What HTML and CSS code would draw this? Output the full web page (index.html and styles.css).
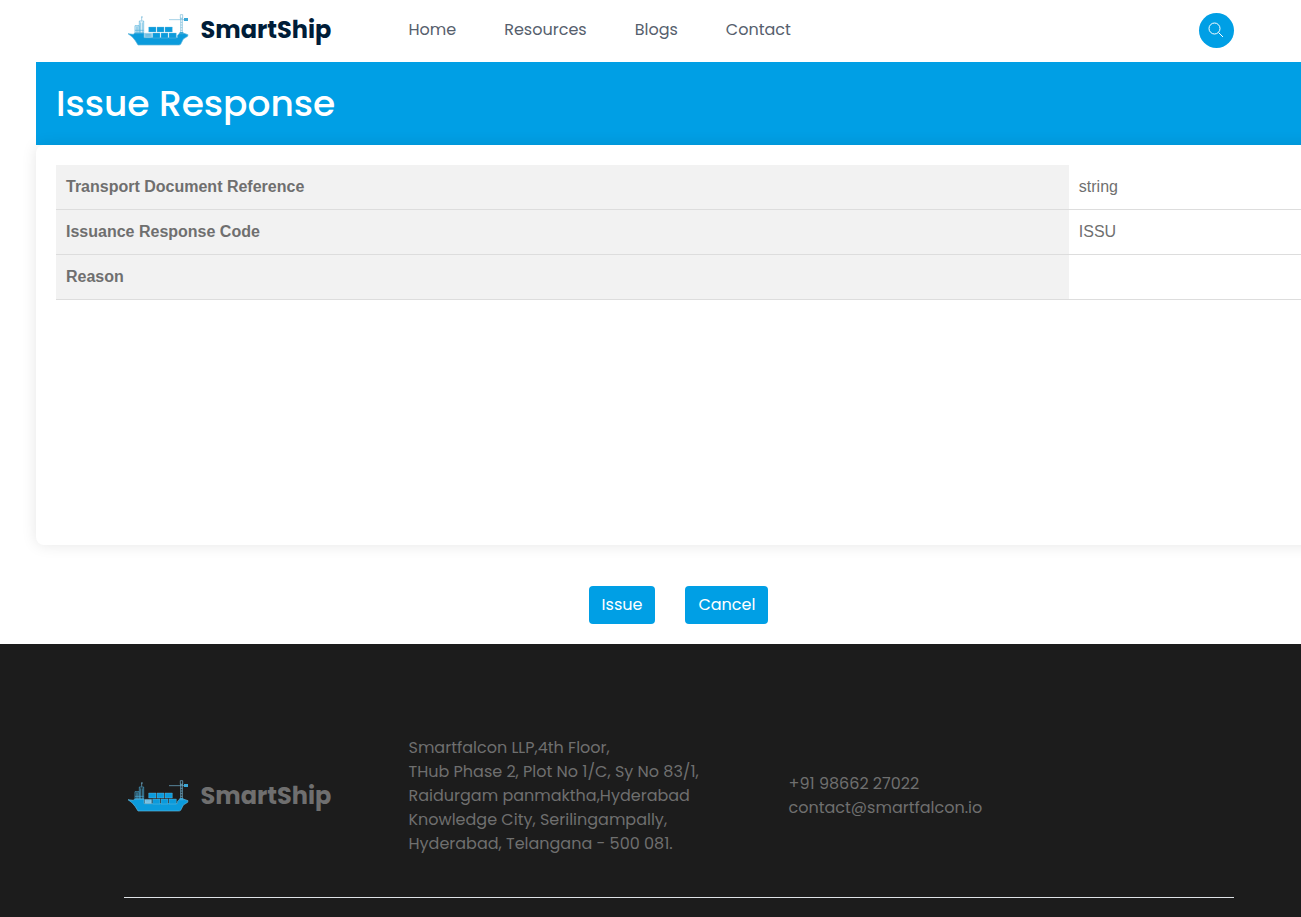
FILE: index.html
```html
<!DOCTYPE html>
<html lang="en">
<head>
<meta charset="utf-8">
<meta name="viewport" content="width=device-width, initial-scale=1">
<title>SmartShip - Issue Response</title>
<link rel="stylesheet" href="styles.css">
</head>
<body>
<svg class="sprite" aria-hidden="true">
  <symbol id="ship" viewBox="21 18 186 96">
    <path fill="#0b9bdc" stroke="#5fb7dd" stroke-width="2" d="M24 77L40 79L44 75H72V89H172V83L178 76H192L204 80L203 85L190 93L182 109Q180 111 176 111H54L46 98L37 87Z"/>
    <path fill="#0b9bdc" stroke="#7fc4e4" stroke-width="1" d="M86 57h22v15H86zM111 57h21v15h-21zM135 57h22v15h-22zM98 75h22v15H98zM123 75h21v15h-21zM147 75h22v15h-22z"/>
    <path fill="#93cbe6" stroke="#4fadd8" d="M74 76h21v13H74z"/>
    <path fill="none" stroke="#0b9bdc" d="M77 80h15M77 84h15"/>
    <path fill="none" stroke="#4aaedb" stroke-width="2" d="M58 39h13v36H58zM62 43v32M67 43v32M45 53h12v22H45zM49 55v20M53 55v20M45 67h26"/>
    <path fill="none" stroke="#75bad9" stroke-width="2" d="M65 38V26M63 27h6M147 35h45M182 77V29M187 77V29"/>
    <path fill="none" stroke="#75bad9" stroke-width="2" d="M181 20h7v11h-7zM182 43h5M182 51h5M182 59h5M182 67h5"/>
    <path fill="#39a7d7" d="M192 30h12v9h-12zM179 72h11v7h-11z"/>
  </symbol>
</svg>
<div class="page">
  <header class="header">
    <div class="container columns">
      <a class="brand" href="#"><svg class="brand-ship" aria-hidden="true"><use href="#ship"/></svg>SmartShip</a>
      <nav class="nav" aria-label="Main">
        <a href="#">Home</a>
        <a href="#">Resources</a>
        <a href="#">Blogs</a>
        <a href="#">Contact</a>
      </nav>
      <button class="search" type="button" aria-label="Search">
        <svg viewBox="0 0 16 16" aria-hidden="true"><circle cx="6.5" cy="6.5" r="5.5"/><path d="M10.5 10.5L15 15"/></svg>
      </button>
    </div>
  </header>
  <main class="main">
    <h1 class="title">Issue Response</h1>
    <section class="card">
      <table class="details">
        <tbody>
          <tr><th scope="row">Transport Document Reference</th><td>string</td></tr>
          <tr><th scope="row">Issuance Response Code</th><td>ISSU</td></tr>
          <tr><th scope="row">Reason</th><td></td></tr>
        </tbody>
      </table>
    </section>
  </main>
  <div class="actions">
    <button class="button" type="button">Issue</button>
    <button class="button" type="button">Cancel</button>
  </div>
  <footer class="footer">
    <div class="container columns footer-content">
      <a class="brand brand-muted" href="#"><svg class="brand-ship" aria-hidden="true"><use href="#ship"/></svg>SmartShip</a>
      <address class="address">Smartfalcon LLP,4th Floor,<br>THub Phase 2, Plot No 1/C, Sy No 83/1,<br>Raidurgam panmaktha,Hyderabad<br>Knowledge City, Serilingampally,<br>Hyderabad, Telangana - 500 081.</address>
      <div class="contact"><span>+91 98662 27022</span><span>contact@smartfalcon.io</span></div>
    </div>
  </footer>
</div>
</body>
</html>
```
FILE: styles.css
```css
* {
  box-sizing: border-box;
}

body {
  margin: 0;
  overflow-x: hidden;
  background: #fff;
  color: #6f6f6f;
  font: 16px/24px Poppins, Inter, sans-serif;
}

a {
  color: inherit;
  text-decoration: none;
}

.sprite {
  position: absolute;
  width: 0;
  height: 0;
}

.page {
  width: calc(100% + 56px);
}

.container {
  max-width: 1110px;
  margin: 0 auto;
}

.columns {
  display: grid;
  grid-template-columns: 285px 380px 1fr;
  align-items: center;
}

.header {
  padding: 12px 0 14px;
}

.brand {
  display: flex;
  align-items: center;
  gap: 12px;
  padding-left: 3px;
  color: #001d38;
  font-size: 24px;
  font-weight: 700;
  line-height: 36px;
}

.brand-muted {
  color: #6f6f6f;
}

.brand-ship {
  width: 62px;
  height: 32px;
}

.nav {
  display: flex;
  gap: 48px;
  color: #56606d;
}

.search {
  display: grid;
  place-items: center;
  justify-self: end;
  width: 35px;
  height: 35px;
  margin-top: 1px;
  padding: 0 1px 2px 0;
  border: 0;
  border-radius: 50%;
  background: #009fe5;
}

.search svg {
  width: 16px;
  height: 16px;
  fill: none;
  stroke: #fff;
  stroke-width: 1;
}

.main {
  margin: 0 15px 0 36px;
}

.title {
  margin: 0;
  padding: 20px;
  background: #009fe5;
  color: #fff;
  font-size: 36px;
  font-weight: 500;
  line-height: 43px;
}

.card {
  min-height: 400px;
  padding: 20px;
  border-radius: 8px;
  background: #fff;
  box-shadow: 0 0 15px rgba(0, 0, 0, 0.1);
}

.details {
  width: 100%;
  border-spacing: 0;
  font-family: "Liberation Sans", Arial, sans-serif;
}

.details th,
.details td {
  height: 45px;
  padding: 10px;
  border-bottom: 1px solid #ddd;
  text-align: left;
}

.details th {
  width: 80%;
  background: #f2f2f2;
}

.actions {
  display: flex;
  justify-content: center;
  gap: 30px;
  padding: 41px 0 20px;
}

.button {
  padding: 7px 13px;
  border: 0;
  border-radius: 4px;
  background: #009fe5;
  color: #fff;
  font: inherit;
}

.footer {
  padding: 92px 0 19px;
  background: #1c1c1c;
}

.footer-content {
  padding-bottom: 41px;
  border-bottom: 1px solid #dee2e6;
}

.address {
  font-style: normal;
}

.contact {
  display: grid;
}
```
